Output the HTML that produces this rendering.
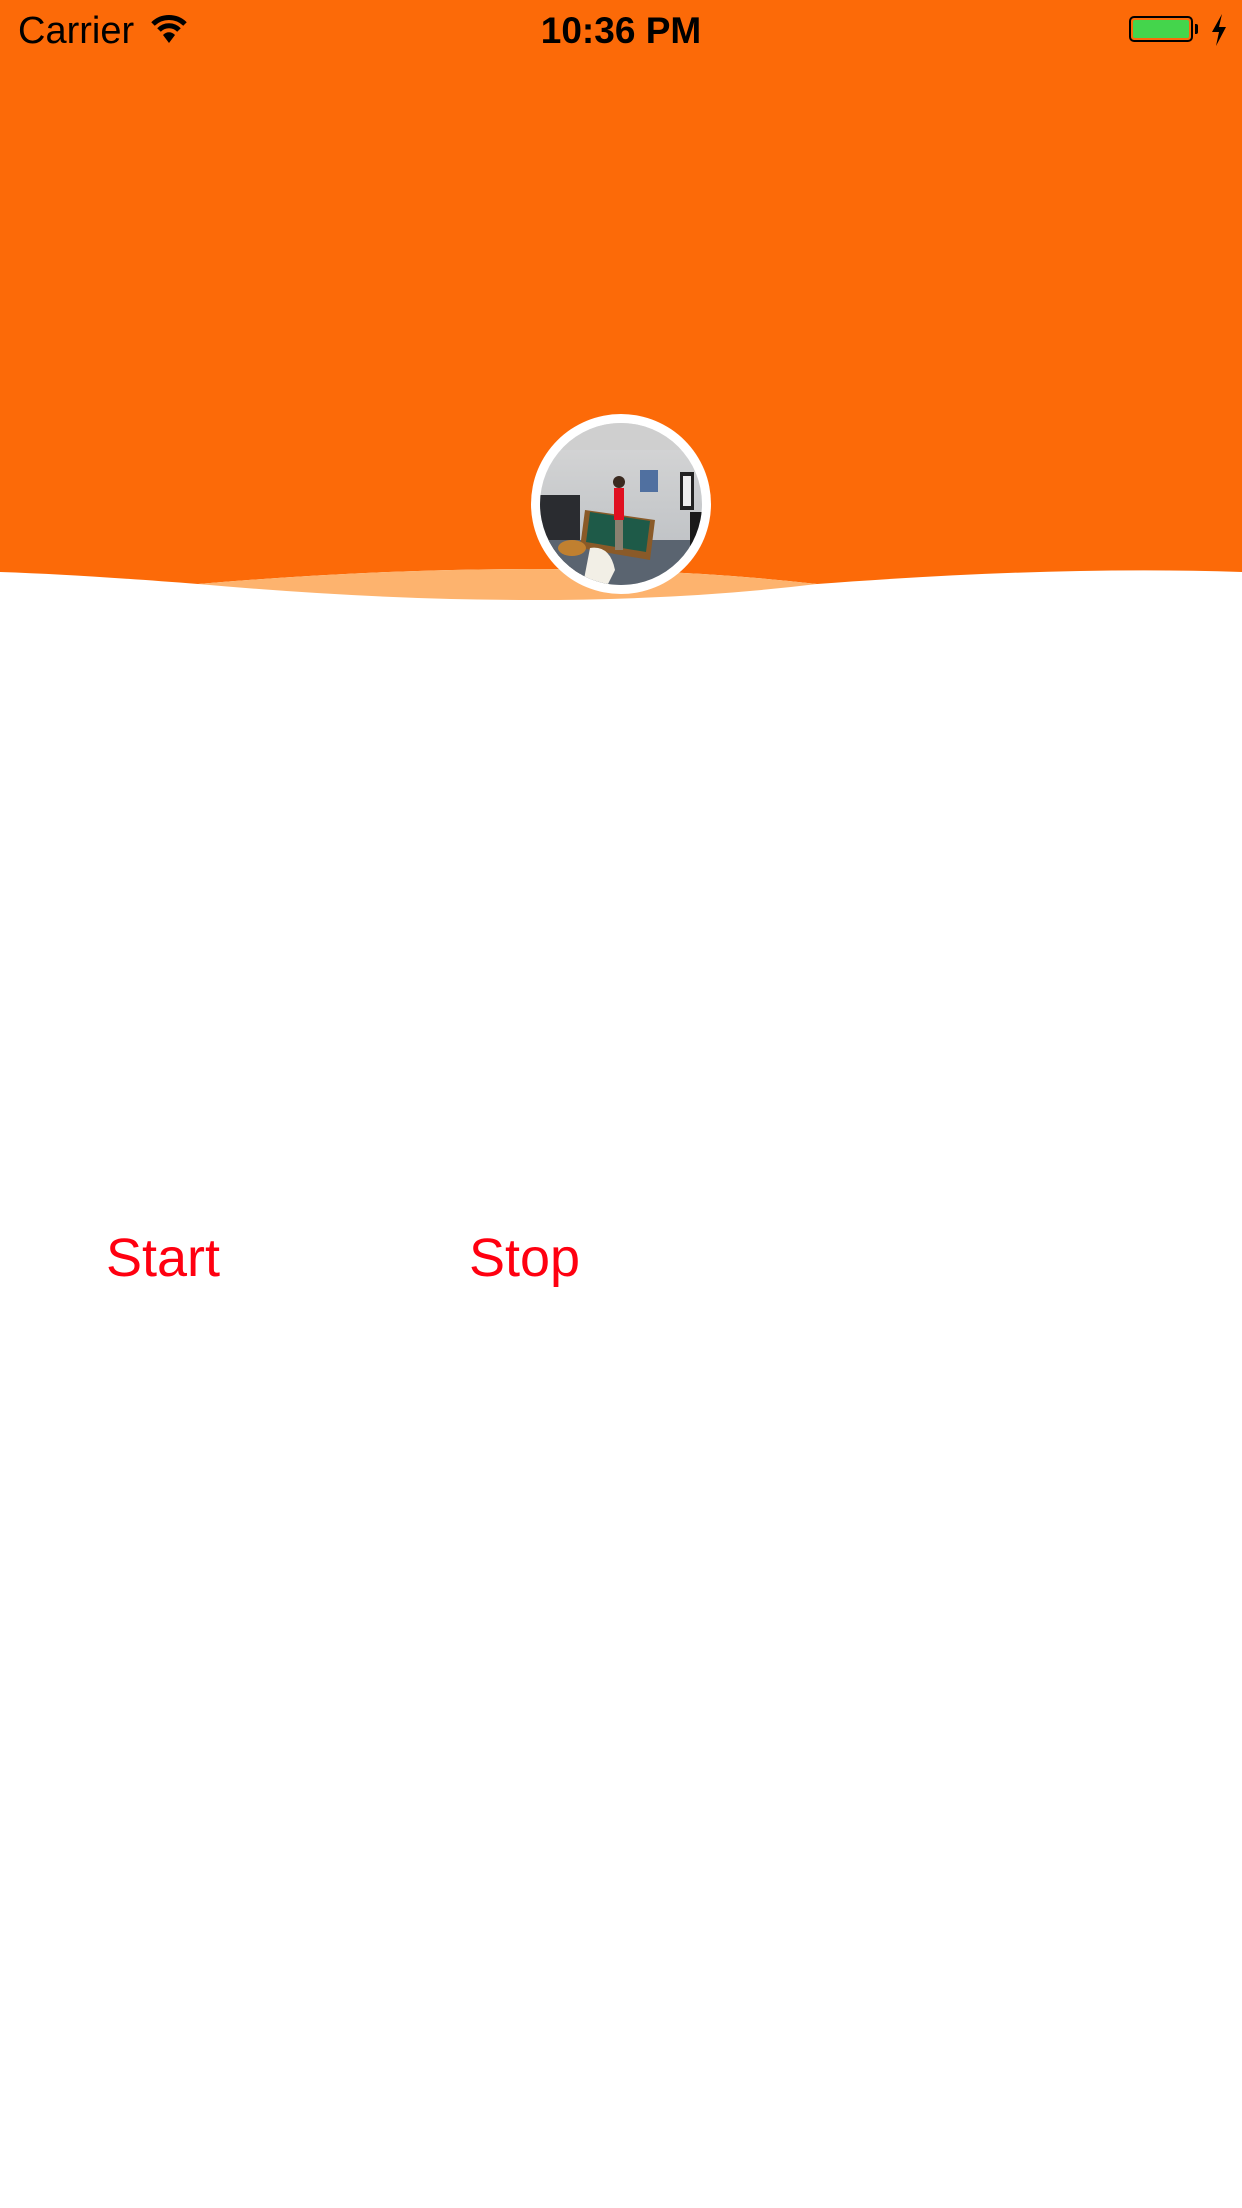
<!DOCTYPE html>
<html><head><meta charset="utf-8"><style>
html,body{margin:0;padding:0;width:1242px;height:2208px;background:#fff;overflow:hidden;font-family:"Liberation Sans",sans-serif;position:relative}
.t{position:absolute;white-space:nowrap;line-height:1}
</style></head><body>
<svg width="1242" height="2208" style="position:absolute;left:0;top:0">
<path d="M0,0 H1242 V572 C1100,567 950,574 817,584 Q555,554 198,584 C120,578 60,574 0,572 Z" fill="#fc6a08"/>
<path d="M198,584 Q555,554 817,584 Q555,616 198,584 Z" fill="#fdb36e"/>
<defs>
<clipPath id="c"><circle cx="621" cy="504" r="81"/></clipPath>
<linearGradient id="wall" x1="0" y1="0" x2="0" y2="1"><stop offset="0" stop-color="#d8d8d8"/><stop offset="1" stop-color="#b8bcc0"/></linearGradient>
</defs>
<circle cx="621" cy="504" r="90" fill="#fff"/>
<g clip-path="url(#c)">
<rect x="530" y="420" width="184" height="170" fill="url(#wall)"/>
<rect x="530" y="420" width="184" height="30" fill="#cfcfcf"/>
<rect x="530" y="495" width="50" height="100" fill="#2a2c30"/>
<rect x="530" y="540" width="184" height="60" fill="#5a6470"/>
<path d="M585,510 L655,520 L650,560 L580,548 Z" fill="#8a5a28"/>
<path d="M590,512 L650,521 L646,552 L586,542 Z" fill="#1e5a48"/>
<rect x="614" y="488" width="10" height="32" fill="#e01020"/>
<rect x="615" y="520" width="8" height="30" fill="#8a8070"/>
<circle cx="619" cy="482" r="6" fill="#3a2a20"/>
<rect x="680" y="472" width="14" height="38" fill="#222"/>
<rect x="683" y="476" width="8" height="30" fill="#eee"/>
<rect x="690" y="512" width="24" height="50" fill="#1a1a1a"/>
<path d="M590,548 Q610,545 615,570 L600,600 L580,600 Z" fill="#f2efe6"/>
<ellipse cx="572" cy="548" rx="14" ry="8" fill="#c08030"/>
<rect x="640" y="470" width="18" height="22" fill="#5070a0"/>
</g>
</svg>
<div class="t" style="left:18px;top:12px;font-size:38px;color:#000">Carrier</div>
<svg style="position:absolute;left:150px;top:14px" width="38" height="30" viewBox="0 0 38 30">
<path d="M3,10 A23,23 0 0 1 35,10" stroke="#000" stroke-width="5" fill="none"/>
<path d="M9,16 A14,14 0 0 1 29,16" stroke="#000" stroke-width="5" fill="none"/>
<path d="M19,29 L13,21 A8,8 0 0 1 25,21 Z" fill="#000"/>
</svg>
<div class="t" style="left:0;width:1242px;text-align:center;top:12px;font-size:37px;font-weight:bold;color:#000">10:36 PM</div>
<div style="position:absolute;left:1129px;top:16px;width:64px;height:26px;border:2px solid #000;border-radius:5px;box-sizing:border-box;padding:2px">
<div style="width:100%;height:100%;background:#44d54c;border-radius:2px"></div></div>
<div style="position:absolute;left:1195px;top:24px;width:3px;height:10px;background:#000;border-radius:0 2px 2px 0"></div>
<svg style="position:absolute;left:1210px;top:14px" width="18" height="32" viewBox="0 0 18 32"><path d="M12,0 L2,18 L9,18 L6,32 L16,13 L9,13 Z" fill="#000"/></svg>
<div class="t" style="left:106px;top:1231px;font-size:54px;color:#ff0010">Start</div>
<div class="t" style="left:469px;top:1231px;font-size:54px;color:#ff0010">Stop</div>
</body></html>
